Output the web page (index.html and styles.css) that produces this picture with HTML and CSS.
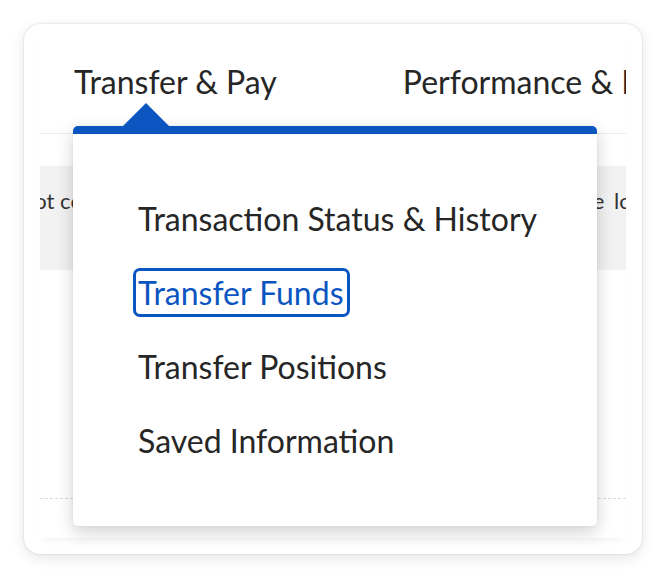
FILE: index.html
```html
<!DOCTYPE html>
<html lang="en">
<head>
<meta charset="utf-8">
<title>Transfer &amp; Pay</title>
<link rel="stylesheet" href="styles.css">
</head>
<body>
<div class="card">
  <div class="inner">
    <nav class="tabs">
      <span class="tab">Transfer &amp; Pay</span>
      <span class="tab">Performance &amp; Insights</span>
    </nav>
    <div class="spacer"></div>
    <div class="notice">
      <span class="notice-left">not complete your request</span>
      <span class="notice-right">see the log</span>
    </div>
    <div class="gap"></div>
    <div class="dotted"></div>
  </div>
  <div class="dropdown">
    <span class="arrow"></span>
    <ul class="menu">
      <li><a class="item">Transaction Status &amp; History</a></li>
      <li><a class="item item-focus">Transfer Funds</a></li>
      <li><a class="item">Transfer Positions</a></li>
      <li><a class="item">Saved Information</a></li>
    </ul>
  </div>
</div>
</body>
</html>
```
FILE: styles.css
```css
* { box-sizing: border-box; }
html, body { margin: 0; padding: 0; background: #ffffff; }
body {
  font-family: "Lato", "Liberation Sans", sans-serif;
  color: #262626;
  padding: 24px;
}
.card {
  position: relative;
  width: 618px;
  height: 530px;
  background: #fff;
  border-radius: 16px;
  box-shadow: 0 0 2px rgba(0,0,0,0.18), 0 4px 14px rgba(0,0,0,0.10);
  padding: 0 16px;
  overflow: hidden;
}
.inner {
  height: 514px;
  display: flex;
  flex-direction: column;
  box-shadow: 0 6px 8px -4px rgba(0,0,0,0.05);
}
.tabs {
  height: 110px;
  display: flex;
  gap: 126px;
  padding: 39px 0 0 34px;
  border-bottom: 1px solid #ececec;
  white-space: nowrap;
  overflow: hidden;
}
.tab {
  flex: none;
  font-size: 32px;
  line-height: 38px;
  color: #262626;
}
.spacer { height: 32px; }
.notice {
  height: 104px;
  background: #f2f2f2;
  display: flex;
  justify-content: space-between;
  overflow: hidden;
  white-space: nowrap;
  font-size: 22px;
  line-height: 26px;
  padding-top: 22px;
  color: #333;
}
.notice-left { margin-left: -18px; }
.notice-right { margin-right: -17px; word-spacing: 4px; }
.gap { height: 228px; }
.dotted { border-top: 1px dashed #dcdcdc; }

.dropdown {
  position: absolute;
  left: 49px;
  top: 102px;
  width: 524px;
  height: 400px;
  background: #fff;
  border-top: 8px solid #0b55c1;
  border-radius: 5px;
  box-shadow: 0 6px 18px rgba(0,0,0,0.18), 0 0 3px rgba(0,0,0,0.06);
}
.arrow {
  position: absolute;
  left: 50px;
  top: -31px;
  width: 0;
  height: 0;
  border-left: 23px solid transparent;
  border-right: 23px solid transparent;
  border-bottom: 23px solid #0b55c1;
}
.menu {
  list-style: none;
  margin: 0;
  padding: 60px 0 0 60px;
  display: flex;
  flex-direction: column;
  gap: 25px;
}
.menu li { display: block; }
.item {
  display: inline-block;
  height: 49px;
  line-height: 43px;
  padding: 0 3px 0 2px;
  border: 3px solid transparent;
  border-radius: 7px;
  font-size: 32px;
  color: #262626;
  white-space: nowrap;
}
.item-focus {
  border-color: #0b55c1;
  color: #0b55c1;
}
```
